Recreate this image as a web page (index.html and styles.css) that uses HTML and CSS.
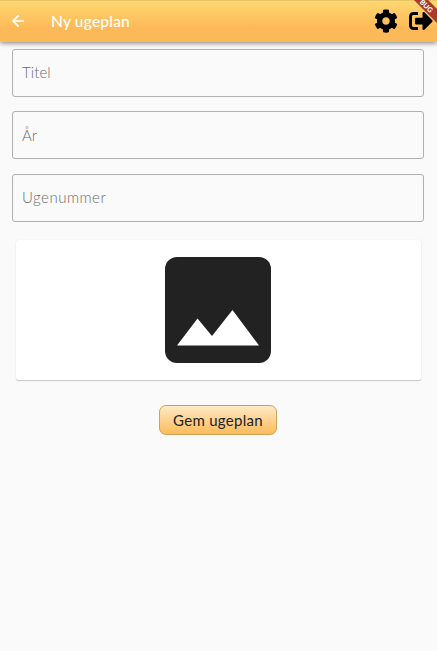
FILE: index.html
```html
<!DOCTYPE html>
<html lang="da">
<head>
<meta charset="utf-8">
<title>Ny ugeplan</title>
<link rel="stylesheet" href="styles.css">
</head>
<body>
<header class="bar">
  <svg class="back" viewBox="0 0 24 24"><path d="M20 11H7.830l5.590-5.590L12 4l-8 8 8 8 1.410-1.410L7.830 13H20v-2z"/></svg>
  <h1 class="title">Ny ugeplan</h1>
  <svg class="gear" viewBox="0 0 512 512"><path d="M487.4 315.7l-42.6-24.6c4.3-23.2 4.3-47 0-70.2l42.6-24.6c4.9-2.8 7.1-8.6 5.5-14-11.1-35.6-30-67.8-54.7-94.6-3.8-4.1-10-5.1-14.8-2.3L380.8 110c-17.9-15.4-38.5-27.3-60.8-35.1V25.8c0-5.6-3.9-10.5-9.4-11.7-36.7-8.2-74.3-7.8-109.2 0-5.5 1.2-9.4 6.1-9.4 11.7V75c-22.2 7.9-42.8 19.8-60.8 35.1L88.7 85.5c-4.9-2.8-11-1.9-14.8 2.3-24.7 26.7-43.6 58.9-54.7 94.6-1.7 5.4.6 11.2 5.5 14L67.3 221c-4.3 23.2-4.3 47 0 70.2l-42.6 24.6c-4.9 2.8-7.1 8.6-5.5 14 11.1 35.6 30 67.8 54.7 94.6 3.8 4.1 10 5.1 14.8 2.3l42.6-24.6c17.9 15.4 38.5 27.3 60.8 35.1v49.2c0 5.6 3.9 10.5 9.4 11.7 36.7 8.2 74.3 7.8 109.2 0 5.5-1.2 9.4-6.1 9.4-11.7v-49.2c22.2-7.9 42.8-19.8 60.8-35.1l42.6 24.6c4.9 2.8 11 1.9 14.8-2.3 24.7-26.7 43.6-58.9 54.7-94.6 1.5-5.5-.7-11.3-5.6-14.1zM256 336c-44.1 0-80-35.9-80-80s35.9-80 80-80 80 35.9 80 80-35.9 80-80 80z"/></svg>
  <svg class="exit" viewBox="0 0 512 512"><path d="M497 273L329 441c-15 15-41 4.5-41-17v-96H152c-13.3 0-24-10.7-24-24v-96c0-13.3 10.7-24 24-24h136V88c0-21.4 25.9-32 41-17l168 168c9.3 9.4 9.3 24.6 0 34zM192 436v-40c0-6.6-5.4-12-12-12H96c-17.7 0-32-14.3-32-32V160c0-17.7 14.3-32 32-32h84c6.600 0 12-5.400 12-12V76c0-6.600-5.400-12-12-12H96c-53 0-96 43-96 96v192c0 53 43 96 96 96h84c6.600 0 12-5.400 12-12z"/></svg>
  <div class="corner"><span class="ribbon">BUG</span></div>
</header>
<main class="form">
  <div class="field"><span class="l-titel">Titel</span></div>
  <div class="field"><span>År</span></div>
  <div class="field"><span class="l-uge">Ugenummer</span></div>
  <div class="card">
    <svg class="picture" viewBox="0 0 106 106"><rect width="106" height="106" rx="12" fill="#222"/><path d="M12 88.500L32.500 61.500 47 79 67.500 53 94 88.500z" fill="#fff"/></svg>
  </div>
  <button class="save" type="button">Gem ugeplan</button>
</main>
</body>
</html>
```
FILE: styles.css
```css
* { box-sizing: border-box; }
body {
  margin: 0;
  height: 651px;
  overflow: hidden;
  background: #fafafa;
  font-family: Lato, sans-serif;
  font-size: 15px;
}
.bar {
  position: relative;
  display: flex;
  align-items: center;
  height: 42px;
  padding: 0 4px 1px 9px;
  background: linear-gradient(rgba(0, 0, 0, .09) 0 1px, transparent 1px), linear-gradient(#fed871, #fdb957 68%);
  box-shadow: 0 1px 5px rgba(0, 0, 0, .5);
}
.back { width: 18px; height: 18px; fill: #fff; stroke: #fff; stroke-width: .4; }
.title {
  flex: 1;
  margin: 0 0 0 24px;
  color: #fff;
  font-size: 15.500px;
  font-weight: 500;
  letter-spacing: .2px;
}
.gear, .exit { width: 24px; height: 24px; margin-right: 11px; }
.exit { margin-right: 0; }
.corner {
  position: absolute;
  top: 0;
  right: 0;
  width: 36px;
  height: 36px;
  overflow: hidden;
}
.ribbon {
  position: absolute;
  top: 0;
  left: 0;
  width: 50px;
  height: 10px;
  color: #fff;
  background: #a83b2b;
  font-size: 7px;
  font-weight: 900;
  line-height: 10px;
  text-align: center;
  text-indent: 2px;
  transform: rotate(45deg);
}
.form {
  display: flex;
  flex-direction: column;
  align-items: center;
  padding: 6.500px 13px 0 12px;
}
.field {
  display: flex;
  align-items: center;
  width: 100%;
  height: 48px;
  margin-bottom: 14.500px;
  padding: 0 0 1px 9px;
  border: 1px solid #b0b0b0;
  border-radius: 3px;
  color: #6c6c6c;
  font-weight: 300;
}
.l-titel { letter-spacing: .1px; }
.l-uge { letter-spacing: .5px; }
.card {
  display: flex;
  justify-content: center;
  width: 405px;
  height: 140px;
  margin-top: 4px;
  padding-top: 17px;
  border-radius: 2px;
  background: #fff;
  box-shadow: 0 1px 1px rgba(0, 0, 0, .2), 0 0 1px rgba(0, 0, 0, .12);
}
.picture { width: 106px; height: 106px; }
.save {
  width: 118px;
  height: 30px;
  margin-top: 24.500px;
  padding: 0;
  border: 1px solid #c9a456;
  border-radius: 7px;
  background: linear-gradient(#feeac6, #fdbb5b);
  color: #222;
  font: 15px Lato, sans-serif;
  letter-spacing: .3px;
}
```
